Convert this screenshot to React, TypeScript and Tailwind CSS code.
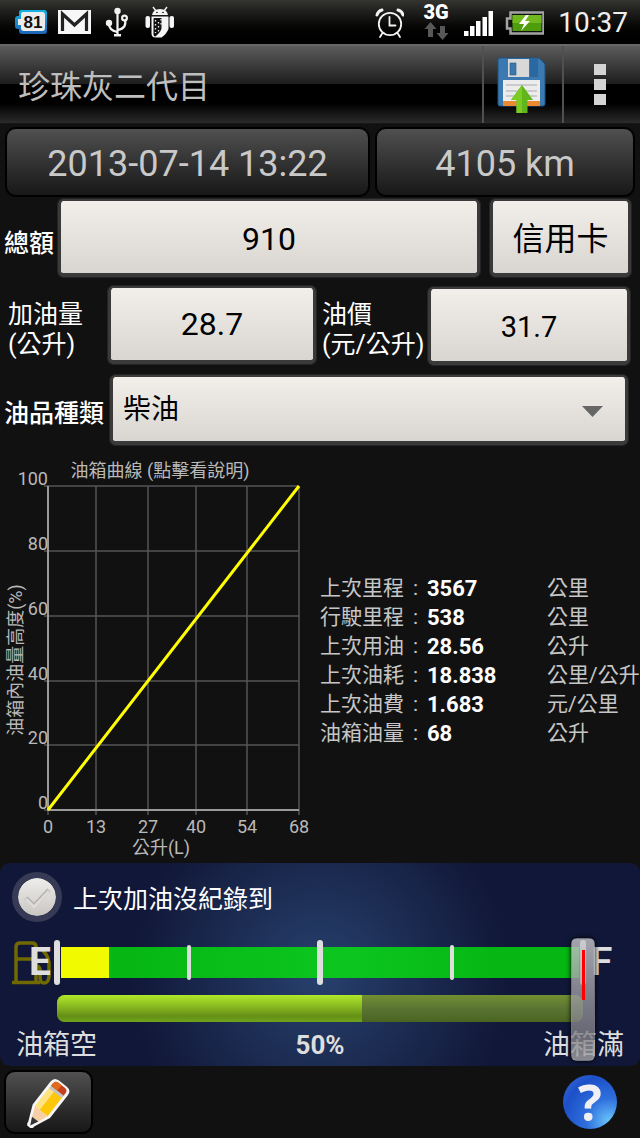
import { useState, type ReactNode } from "react";

const stats = [
  { label: "上次里程", value: "3567", unit: "公里" },
  { label: "行駛里程", value: "538", unit: "公里" },
  { label: "上次用油", value: "28.56", unit: "公升" },
  { label: "上次油耗", value: "18.838", unit: "公里/公升" },
  { label: "上次油費", value: "1.683", unit: "元/公里" },
  { label: "油箱油量", value: "68", unit: "公升" },
];

const xTicks = [
  { x: 48, label: "0" },
  { x: 96, label: "13" },
  { x: 148, label: "27" },
  { x: 196, label: "40" },
  { x: 247, label: "54" },
  { x: 299, label: "68" },
];

const yTicks = [
  { y: 486, label: "100" },
  { y: 551, label: "80" },
  { y: 616, label: "60" },
  { y: 681, label: "40" },
  { y: 745, label: "20" },
  { y: 810, label: "0" },
];

const fieldClass =
  "min-w-0 rounded-[5px] border-[3px] border-t-2 border-b-4 border-[#3a3a3a] bg-linear-to-b from-[#f2efeb] to-[#d9d6d2] bg-clip-padding text-center text-black outline-1 outline-[#232323]";

const darkButtonClass =
  "rounded-[10px] border border-black bg-linear-to-b from-[#505050] to-[#181818] text-[#c9c9c9] shadow-[0_0_0_1px_#000]";

function StatusIcon({ viewBox, children }: { viewBox: string; children: ReactNode }) {
  return (
    <svg viewBox={viewBox} className="h-11 w-9 shrink-0">
      {children}
    </svg>
  );
}

function StatusBar() {
  return (
    <header className="flex h-11 items-center justify-between bg-linear-to-b from-[#343431] to-black pl-[13px] pr-3">
      <div className="flex gap-[7px]">
        <StatusIcon viewBox="14 0 36 44">
          <defs>
            <linearGradient id="badge" x1="0" y1="0" x2="0" y2="1">
              <stop offset="0" stopColor="#16b4e6" />
              <stop offset="1" stopColor="#1e63b4" />
            </linearGradient>
          </defs>
          <path d="M22 10h23q3 0 3 3v18q0 3-3 3H23q-3 0-3-3v-2h-1q-3 0-3-3v-7q0-3 3-3h1v-3q0-3 2-3z" fill="url(#badge)" />
          <path d="M24 12h19q3 0 3 3v13q0 3-3 3H25q-3 0-3-3v-3h-3v-6h3v-4q0-3 2-3z" fill="#ececec" />
          <text x="34" y="28" textAnchor="middle" fontSize="17" fontWeight="700" fill="#111" fontFamily="Liberation Sans, Arial, sans-serif">
            81
          </text>
        </StatusIcon>
        <StatusIcon viewBox="56 0 36 44">
          <path d="M58 10h33v24H58z" fill="#f7f7f7" />
          <path d="M62.500 31V14L74.500 25 86.500 14v17" fill="none" stroke="#222" strokeWidth="3.200" />
        </StatusIcon>
        <StatusIcon viewBox="99 0 36 44">
          <g fill="none" stroke="#f2f2f2" strokeWidth="2.200">
            <path d="M117.500 13v22M109 24q0 6 8 8M125 20q2 8-7 10" />
            <circle cx="124.500" cy="18" r="2.400" />
          </g>
          <circle cx="117.500" cy="11" r="3.200" fill="#f2f2f2" />
          <circle cx="109" cy="23" r="3.200" fill="#f2f2f2" />
          <path d="M114 34h7v2.500h-7z" fill="#f2f2f2" />
        </StatusIcon>
        <StatusIcon viewBox="142 0 36 44">
          <g fill="#f5f5f5">
            <path d="M152 15q1-6 8-6t8 6z" />
            <path d="M153 7l3 4M167 7l-3 4" stroke="#f5f5f5" strokeWidth="1.400" />
            <rect x="145.500" y="16" width="4.500" height="12" rx="2" />
            <rect x="169.500" y="16" width="4.500" height="12" rx="2" />
            <path d="M151.500 16.500h17V29q-2 5-7 8.500h-6q-4 0-4-4z" />
          </g>
          <path d="M153.500 19q0-1 1-1h7v10q0 3-6 8.500-2 0-2-2z" fill="#111" />
          <path d="M155.500 20v13M158.500 22v11M161 19v8" stroke="#eee" strokeWidth="1.300" strokeDasharray="1.500 2.500" />
          <circle cx="157" cy="12.500" r=".8" fill="#111" />
          <circle cx="163" cy="12.500" r=".8" fill="#111" />
        </StatusIcon>
      </div>
      <div className="flex items-center gap-[9px]">
        <StatusIcon viewBox="368 0 36 44">
          <g fill="none" stroke="#f4f4f4" strokeWidth="1.800" strokeLinecap="round">
            <circle cx="390" cy="24" r="11.200" />
            <path d="M389.500 17v8.500h6M382.500 33l-2.500 4M397.500 33l2.500 4" />
            <path d="M377 15q1-4 5-5M403 15q-1-4-5-5" strokeWidth="3" />
          </g>
        </StatusIcon>
        <StatusIcon viewBox="413 0 36 44">
          <text x="436" y="19" textAnchor="middle" fontSize="20" fontWeight="900" fill="#fff" fontFamily="Roboto, sans-serif">
            3G
          </text>
          <path d="M430.500 22l6 7h-3.500v8h-5v-8H424.500zM442.500 40l-6-7h3.500v-7h5v7h3.500z" fill="#585858" />
        </StatusIcon>
        <StatusIcon viewBox="460 0 36 44">
          <path d="M466 31h4.500v5H466zM472 26h4.500v10H472zM478 21h4.500v15H478zM484.500 17h4.500v19h-4.500zM490.500 11h4.500v25h-4.500z" fill="#fff" />
        </StatusIcon>
        <svg viewBox="503 0 41 44" className="h-11 w-[41px]">
          <path d="M510.500 12.500h33v21h-33v-5h-3.500v-10h3.500z" fill="#111" stroke="#a3a3a3" strokeWidth="2.500" />
          <path d="M512.500 15h29v16h-29z" fill="#4f9d0c" />
          <path d="M512.500 15h29v8h-29z" fill="#70b81e" />
          <path d="M526 15l-7 9h5l-3 7 9-10h-5l4-6z" fill="#fff" />
        </svg>
        <span className="pt-[2px] pl-[5px] text-[28px] leading-none text-[#efefef]">10:37</span>
      </div>
    </header>
  );
}

function SaveIcon() {
  return (
    <svg viewBox="495 55 52 60" className="h-[60px] w-[52px]">
      <path d="M499 58h39l6 6v40q0 2-2 2h-43q-2 0-2-2V60q0-2 2-2z" fill="#3b79b0" stroke="#1f5283" />
      <path d="M529 59h8v18h-8z" fill="#2968a0" />
      <path d="M507 59h21v18h-21z" fill="#d8d8d8" />
      <path d="M509 63h6v12h-6z" fill="#3b78ae" stroke="#265a87" strokeWidth=".6" />
      <path d="M502 80h37v25h-37z" fill="#ececec" />
      <path d="M505 85h31M505 91h31M505 96h31" stroke="#a8a8a8" />
      <path d="M502 101h37v5h-37z" fill="#e98a32" />
      <path d="M521 85l11 15h-5.500v13h-11v-13H510z" fill="#62b51b" />
      <path d="M521 85v28h-5.500v-13H510z" fill="#7bcb24" />
    </svg>
  );
}

function TitleBar() {
  return (
    <div className="flex h-20 items-stretch border-t-2 border-b border-t-[#686868] border-b-[#161616] bg-[linear-gradient(to_bottom,#5c5c5c_0%,#1c1c1c_50%,#000_50%,#000_75%,#2b2b2b_100%)]">
      <h1 className="flex flex-1 items-center pt-1 pl-[18px] text-[32px] leading-none text-[#bebebe]">珍珠灰二代目</h1>
      <button type="button" aria-label="儲存" className="flex w-20 items-center justify-center border-l-2 border-[#505050] pr-[2px]">
        <SaveIcon />
      </button>
      <button type="button" aria-label="選單" className="flex w-[78px] flex-col items-center justify-center gap-1 border-l-2 border-[#505050] pr-1">
        <span className="h-[11px] w-3 bg-[#d4d4d4]" />
        <span className="h-[11px] w-3 bg-[#d4d4d4]" />
        <span className="h-[11px] w-3 bg-[#d4d4d4]" />
      </button>
    </div>
  );
}

function FuelForm() {
  return (
    <form className="text-[25px] leading-[30px] font-medium text-white">
      <div className="flex gap-[7px] px-[6px] pt-1 text-[36px] font-normal">
        <button type="button" className={`h-[68px] flex-[364] pt-1 ${darkButtonClass}`}>
          2013-07-14 13:22
        </button>
        <button type="button" className={`h-[68px] flex-[258] pt-1 ${darkButtonClass}`}>
          4105 km
        </button>
      </div>

      <div className="mt-[3px] flex items-center pl-1 pr-[9px]">
        <label htmlFor="total" className="w-[54px] shrink-0 pt-3">
          總額
        </label>
        <input id="total" defaultValue="910" className={`h-[78px] flex-1 pt-1 text-[32px] font-normal ${fieldClass}`} />
        <button type="button" className={`ml-[10px] h-[78px] w-[141px] pt-1 text-[32px] font-normal ${fieldClass}`}>
          信用卡
        </button>
      </div>

      <div className="mt-2 flex items-center pl-2 pr-[10px]">
        <label htmlFor="amount" className="w-[100px] shrink-0 pt-[10px] font-normal">
          加油量
          <br />
          (公升)
        </label>
        <input id="amount" defaultValue="28.7" className={`h-[78px] flex-[208] text-[32px] font-normal ${fieldClass}`} />
        <label htmlFor="price" className="w-[112px] shrink-0 pt-[10px] pl-[6px] font-normal whitespace-nowrap">
          油價
          <br />
          (元/公升)
        </label>
        <input id="price" defaultValue="31.7" className={`mt-[2px] h-[78px] flex-[202] pt-1 text-[29px] font-normal ${fieldClass}`} />
      </div>

      <div className="mt-[10px] flex items-center pl-1 pr-3">
        <label htmlFor="fuel" className="w-[106px] shrink-0 pt-2">
          油品種類
        </label>
        <div className="relative flex-1">
          <select id="fuel" className={`block h-[70px] w-full appearance-none pt-[2px] pl-[10px] text-left! text-[28px] font-normal ${fieldClass}`}>
            <option>柴油</option>
          </select>
          <svg viewBox="0 0 21 11" className="pointer-events-none absolute top-[31px] right-[25px] h-[11px] w-[21px]">
            <path d="M0 0h21L10.500 11z" fill="#666" />
          </svg>
        </div>
      </div>
    </form>
  );
}

function TankCurve() {
  return (
    <svg viewBox="0 450 312 410" className="h-[410px] w-[312px] shrink-0" fontSize="18" fill="#b9b9b9">
      {yTicks.map((t) => (
        <g key={t.label}>
          <path d={`M44 ${t.y}H299`} stroke="#555" strokeWidth="1.500" />
          <text x="48" y={t.y - 1} textAnchor="end">
            {t.label}
          </text>
        </g>
      ))}
      {xTicks.map((t) => (
        <g key={t.label}>
          <path d={`M${t.x} 486V815`} stroke="#555" strokeWidth="1.500" />
          <text x={t.x} y="833" textAnchor="middle">
            {t.label}
          </text>
        </g>
      ))}
      <path d="M48 486V810H299" fill="none" stroke="#9a9a9a" strokeWidth="2" />
      <path d="M48 810L299 486" stroke="#ff0" strokeWidth="3" />
      <text x="160" y="477" textAnchor="middle">
        油箱曲線 (點擊看說明)
      </text>
      <text x="161" y="854" textAnchor="middle">
        公升(L)
      </text>
      <text transform="translate(22 660) rotate(-90)" textAnchor="middle">
        油箱內油量高度(%)
      </text>
    </svg>
  );
}

function LastFillStats() {
  return (
    <table className="ml-2 table-fixed text-left text-[21px] text-[#c6c6c6]">
      <tbody>
        {stats.map((s) => (
          <tr key={s.label} className="h-[29px] leading-[29px] whitespace-nowrap">
            <th className="w-[107px] font-normal">
              {s.label}
              <span className="pl-[9px]">:</span>
            </th>
            <td className="w-[120px] text-[22px] font-bold text-white">{s.value}</td>
            <td>{s.unit}</td>
          </tr>
        ))}
      </tbody>
    </table>
  );
}

function FuelGauge() {
  const [level, setLevel] = useState(100);

  return (
    <section className="rounded-[10px] bg-[radial-gradient(circle_190px_at_50%_55%,#27416d,#111738)] pt-[9px] text-[#dedede]">
      <label className="flex items-center gap-[11px] pl-3 text-[25px] leading-[50px] text-white">
        <span className="relative flex h-[50px] w-[50px]">
          <input
            type="checkbox"
            className="h-[50px] w-[50px] appearance-none rounded-full border-[6px] border-[#363a55] bg-linear-to-b from-[#efedeb] to-[#c9c6c2] bg-clip-padding"
          />
          <svg viewBox="0 0 50 50" className="pointer-events-none absolute inset-0">
            <path d="M14 26l8 8 15-16" fill="none" stroke="#b3b1af" strokeWidth="4.500" />
            <path d="M14 27l8 8 15-16" fill="none" stroke="#dedcda" strokeWidth="3" />
          </svg>
        </span>
        <span className="pt-[6px] leading-[44px]">上次加油沒紀錄到</span>
      </label>

      <div className="relative mt-4 pt-[2px]">
        <div className="flex h-[45px] items-center text-[39px] leading-none">
          <div className="relative flex w-[57px] justify-end pr-[6px]">
            <svg viewBox="11 939 42 46" className="absolute top-[-3px] left-[11px] h-[46px] w-[42px]">
              <g fill="none" stroke="#6f6900" strokeWidth="3.500">
                <path d="M16 980v-34q0-4 4-4h12q4 0 4 4v34M12 981.500h28M16 958h20" />
                <path d="M40 947q8 6 9 15v14q-1 6-5 6t-4-6v-8q-1-3-4-3" />
              </g>
            </svg>
            <span className="relative font-bold">E</span>
          </div>
          <div className="relative h-full flex-1">
            <div className="flex h-full items-center px-1">
              <div className="h-[31px] w-12 bg-[#f2fa00]" />
              <div className="h-[31px] flex-1 bg-[linear-gradient(to_right,#06b613,#0cc61f_50%,#06b613_85%)]" />
            </div>
            <div className="absolute inset-0 -mx-[3px] flex items-center justify-between">
              <span className="h-[45px] w-[6px] rounded-sm bg-[#dedede]" />
              <span className="h-[35px] w-1 rounded-sm bg-[#dedede]" />
              <span className="h-[45px] w-[6px] rounded-sm bg-[#dedede]" />
              <span className="h-[35px] w-1 rounded-sm bg-[#dedede]" />
              <span className="h-[45px] w-[6px] rounded-sm bg-[#dedede]" />
            </div>
          </div>
          <div className="w-[57px] pl-2 font-medium">F</div>
        </div>

        <div className="mx-[57px] mt-[10px] h-[27px] overflow-hidden rounded-lg bg-linear-to-b from-[#728f30] via-[#5a7434] to-[#4a6420]">
          <div className="h-full w-[58%] bg-[linear-gradient(to_bottom,#b0e82a,#82b01f_50%,#639016_78%,#70a31a)]" />
        </div>

        <div className="flex h-[44px] items-center justify-between px-4 pt-[2px] text-[27px]">
          <span className="flex-1">油箱空</span>
          <span className="text-[26px] font-bold">50%</span>
          <span className="flex-1 text-right">油箱滿</span>
        </div>

        <input
          type="range"
          aria-label="油箱油量"
          value={level}
          onChange={(e) => setLevel(Number(e.target.value))}
          className="absolute top-0 right-[45px] left-[45px] h-[123px] appearance-none bg-transparent [&::-webkit-slider-thumb]:h-[123px] [&::-webkit-slider-thumb]:w-6 [&::-webkit-slider-thumb]:appearance-none [&::-webkit-slider-thumb]:rounded-[6px] [&::-webkit-slider-thumb]:border [&::-webkit-slider-thumb]:border-[#a0a0a0aa] [&::-webkit-slider-thumb]:bg-[linear-gradient(#f00,#f00),linear-gradient(to_bottom,#c8c8cccc,#96969ccc_50%,#7c7c82cc_80%,#a8a8a8cc)] [&::-webkit-slider-thumb]:bg-[length:3px_50px,100%_100%] [&::-webkit-slider-thumb]:bg-[position:50%_11px,0_0] [&::-webkit-slider-thumb]:bg-no-repeat [&::-webkit-slider-thumb]:shadow-[0_0_5px_#000]"
        />
      </div>
    </section>
  );
}

function BottomBar() {
  return (
    <footer className="flex h-[72px] items-center justify-between pr-[23px] pl-[5px]">
      <button type="button" aria-label="編輯" className={`flex h-[62px] w-[87px] items-center justify-center ${darkButtonClass}`}>
        <svg viewBox="26 1075 46 52" className="h-[52px] w-[46px]">
          <g transform="translate(29 1126) rotate(38)">
            <path d="M-2 0q-2-1-2-4l-7-16v-29q0-6 6-6H5q6 0 6 6v29L4-4q0 3-2 4z" fill="#f6f6f6" />
            <path d="M-8-44H8v24H-8z" fill="#ffc70a" />
            <path d="M-8-44h6v24h-6z" fill="#ffe382" />
            <path d="M-8-46H8v3H-8z" fill="#c4c4c4" />
            <path d="M-8-46v-3q0-4 4-4h8q4 0 4 4v3z" fill="#c5401c" />
            <path d="M-8-46v-3q0-4 4-4h4v7z" fill="#e06a1e" />
            <path d="M-8-20H8L4-10h-8z" fill="#f7cfa6" />
            <path d="M-4-10h8L0-2z" fill="#333" />
          </g>
        </svg>
      </button>
      <button
        type="button"
        aria-label="說明"
        className="flex h-[54px] w-[54px] items-center justify-center rounded-full bg-[radial-gradient(circle_at_85%_85%,#69c3fa,#2f6fdd_35%,#1c50c8_70%,#3f6fd6)] font-['Open_Sans',sans-serif] text-[50px] leading-none font-bold text-[#f0f0f4]"
      >
        ?
      </button>
    </footer>
  );
}

export default function App() {
  return (
    <div className="flex min-h-screen w-full flex-col overflow-hidden bg-[#111] font-['Roboto','Noto_Sans_CJK_TC',sans-serif]">
      <StatusBar />
      <TitleBar />
      <FuelForm />
      <div className="flex items-center pt-[5px] pb-[3px]">
        <TankCurve />
        <div className="pt-3">
          <LastFillStats />
        </div>
      </div>
      <FuelGauge />
      <BottomBar />
    </div>
  );
}
